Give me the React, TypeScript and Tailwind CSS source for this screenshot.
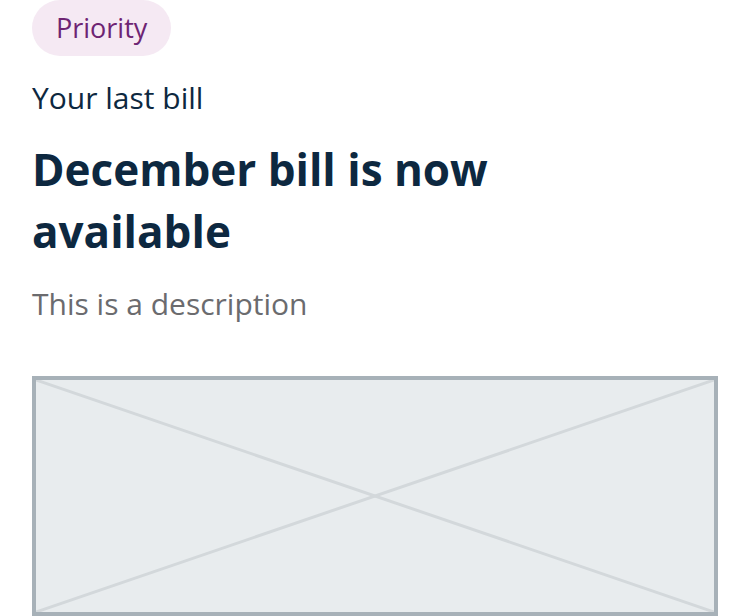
export default function App() {
  return (
    <div className="w-[750px] h-[616px] overflow-hidden bg-white px-8 font-['Open_Sans','Noto_Sans',sans-serif]">
      <div className="flex">
        <span className="flex h-14 items-center rounded-full bg-[#f5e9f3] px-6 text-[27px] text-[#6e2473]">
          Priority
        </span>
      </div>
      <p className="mt-[22px] text-[30px] leading-[40px] text-[#0d2840]">Your last bill</p>
      <h2 className="mt-[20px] w-[500px] text-[44px] font-bold leading-[62px] text-[#0d2840]">
        December bill is now available
      </h2>
      <p className="mt-[22px] text-[30px] leading-[40px] text-[#6b6b6e]">This is a description</p>
      <div className="relative mt-[52px] h-[240px] border-4 border-[#a7b1b8] bg-[#e8ecee]">
        <svg className="absolute inset-0 h-full w-full" viewBox="0 0 100 100" preserveAspectRatio="none">
          <line x1="0" y1="0" x2="100" y2="100" stroke="#d3d8db" strokeWidth="3" vectorEffect="non-scaling-stroke" />
          <line x1="100" y1="0" x2="0" y2="100" stroke="#d3d8db" strokeWidth="3" vectorEffect="non-scaling-stroke" />
        </svg>
      </div>
    </div>
  );
}
